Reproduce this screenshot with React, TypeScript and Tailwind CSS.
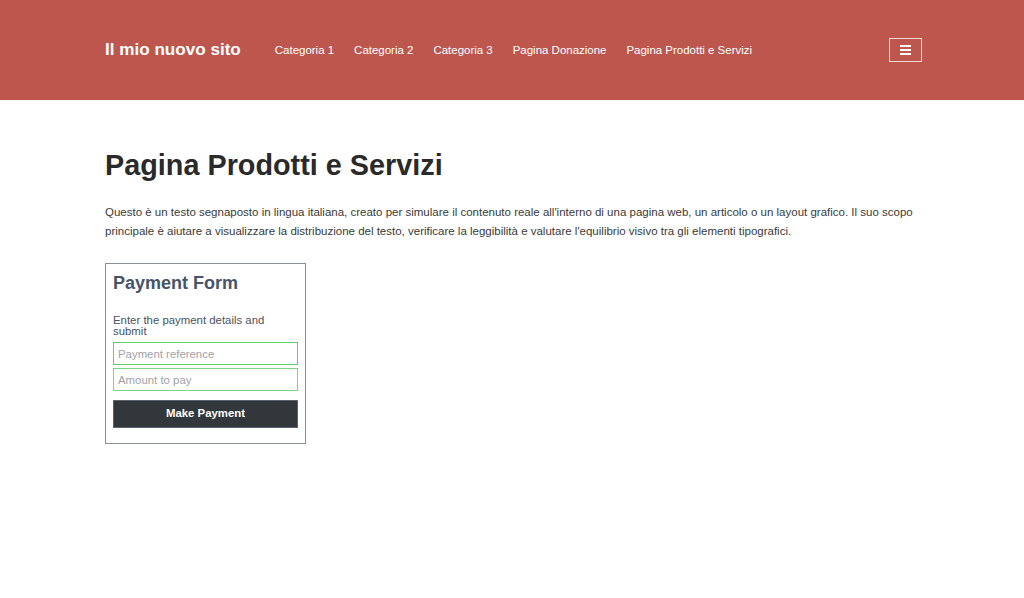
import React from "react";

export default function App() {
  const nav = ["Categoria 1", "Categoria 2", "Categoria 3", "Pagina Donazione", "Pagina Prodotti e Servizi"];
  return (
    <div className="min-h-[598px] bg-white" style={{ fontFamily: '"Liberation Sans", Arial, sans-serif' }}>
      <header className="h-[100px] bg-[#bd574e] pl-[105px] pr-[102px] flex items-center">
        <div className="text-[17.1px] font-bold text-white leading-none mt-[-1px]">Il mio nuovo sito</div>
        <nav className="ml-[34px] flex gap-[20px] text-[11.48px] text-white leading-none mt-[1px]">
          {nav.map((n) => (
            <a key={n} className="whitespace-nowrap">{n}</a>
          ))}
        </nav>
        <button className="ml-auto w-[33px] h-[24px] border border-[#f3d6d2] flex flex-col items-center justify-center gap-[2px]">
          <span className="block w-[11px] h-[2px] bg-white" />
          <span className="block w-[11px] h-[2px] bg-white" />
          <span className="block w-[11px] h-[2px] bg-white" />
        </button>
      </header>
      <main className="pl-[105px] pr-[102px] pt-[49px]">
        <h1 className="text-[28.8px] font-bold text-[#2a2a2a] leading-[32px]">Pagina Prodotti e Servizi</h1>
        <p className="mt-[22px] text-[11.5px] leading-[19px] text-[#3a3a3a]">
          Questo è un testo segnaposto in lingua italiana, creato per simulare il contenuto reale all'interno di una pagina web, un articolo o un layout grafico. Il suo scopo principale è aiutare a visualizzare la distribuzione del testo, verificare la leggibilità e valutare l'equilibrio visivo tra gli elementi tipografici.
        </p>
        <div className="mt-[22px] w-[201px] border border-[#8a8f96] px-[7px] pt-[8px] pb-[15px]">
          <h2 className="text-[18px] font-bold text-[#475467] leading-[22px]">Payment Form</h2>
          <p className="mt-[21px] text-[11.4px] leading-[11px] text-[#4a5262]">Enter the payment details and submit</p>
          <input
            placeholder="Payment reference"
            className="mt-[5px] block w-full h-[23px] border border-[#5dd068] px-[4px] text-[11.4px] outline-none placeholder:text-[#a0a3a8]"
          />
          <input
            placeholder="Amount to pay"
            className="mt-[3px] block w-full h-[23px] border border-[#7ad884] px-[4px] text-[11.4px] outline-none placeholder:text-[#a0a3a8]"
          />
          <button className="mt-[9px] block w-full h-[28px] bg-[#32373c] border border-[#5b636e] text-white font-bold text-[11.4px]">
            Make Payment
          </button>
        </div>
      </main>
    </div>
  );
}
